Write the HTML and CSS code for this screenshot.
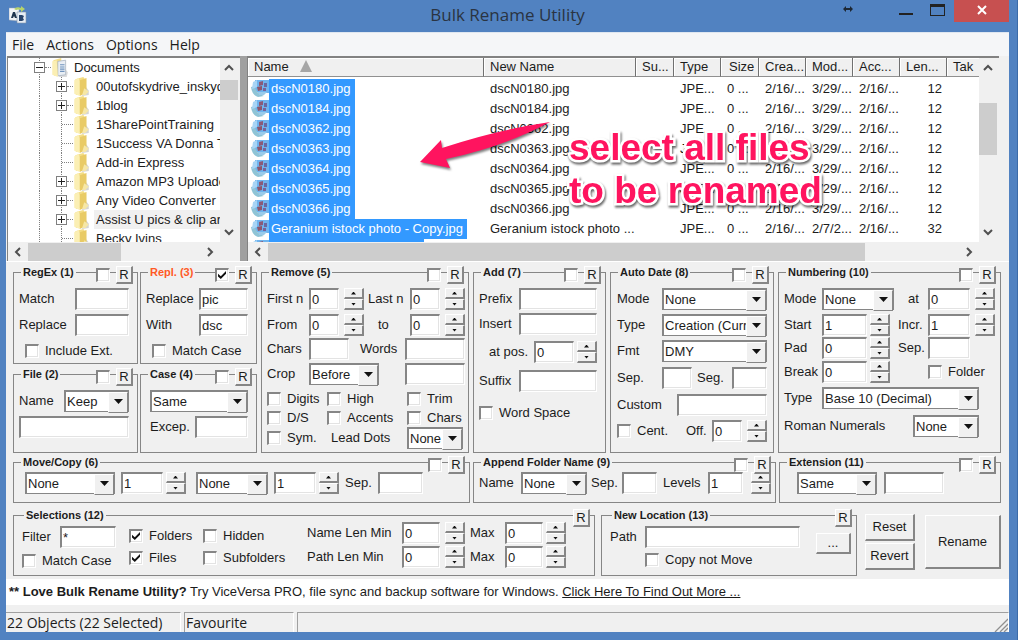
FILE: index.html
```
<!DOCTYPE html>
<html lang="en">
<head>
    <meta charset="UTF-8">
    <meta name="viewport" content="width=device-width, initial-scale=1.0">
    <title>Bulk Rename Utility</title>
    <link rel="stylesheet" href="styles.css">
</head>
<body>

<!-- Shared icons -->
<svg class="defs" aria-hidden="true">
    <symbol id="folder" viewBox="0 0 15 17">
        <path d="M9 6 L14 12 L14 16 L8 17 Z" fill="#b9b9b9" opacity=".6"/>
        <path d="M2 2 L9 0 L10 1 L10 14 L3 16 L2 15 Z" fill="#f3dd86"/>
        <path d="M1 3 L5 1 L6 4 L6 17 L1 15 Z" fill="#fbefb4"/>
        <path d="M6 3 L12 1 L12 14 L6 17 Z" fill="#e9cb66"/>
        <path d="M10 10 L14 13 L11 16 L8 16 Z" fill="#f6e7a6"/>
    </symbol>
    <symbol id="documents" viewBox="0 0 15 17">
        <path d="M9 4 L15 13 L14 17 L7 17 Z" fill="#c4c4c4" opacity=".6"/>
        <path d="M2 2 L9 0 L10 14 L3 16 Z" fill="#f3dd86"/>
        <path d="M6 3 L13 2 L13 15 L6 16 Z" fill="#e9eef4" stroke="#a9b4c0" stroke-width=".7"/>
        <path d="M8 6 H12 M8 8 H12 M8 10 H12 M8 12 H12" stroke="#6f93bd" stroke-width="1"/>
        <path d="M1 3 L5 2 L6 17 L1 15 Z" fill="#fbefb4"/>
    </symbol>
    <symbol id="image" viewBox="0 0 18 18">
        <path d="M4 1 H18 V14 H8 L4 12 Z" fill="#6fb4ee"/>
        <path d="M0 8 Q1 16 7 18 L13 17 Q4 14 4 7 Z" fill="#8fc4d6"/>
        <path d="M2 3 L6 1 L6 8 L1 10 Z" fill="#a8d4f5"/>
        <path d="M8 3 L12 2 L12 6 L8 7 Z" fill="#8a5a78"/>
        <path d="M13 4 H16 V8 H13 Z" fill="#6b68a0"/>
        <path d="M6 8 L11 7 L11 11 L7 12 Z" fill="#8d566c"/>
        <path d="M12 9 H15 V12 H12 Z" fill="#76639a"/>
        <path d="M8 13 L16 13 L13 16 L8 16 Z" fill="#9bcbe9"/>
    </symbol>
    <symbol id="chev-up" viewBox="0 0 10 8"><path d="M1 6 L5 2 L9 6" fill="none" stroke="#505050" stroke-width="2"/></symbol>
    <symbol id="chev-down" viewBox="0 0 10 8"><path d="M1 2 L5 6 L9 2" fill="none" stroke="#505050" stroke-width="2"/></symbol>
    <symbol id="chev-left" viewBox="0 0 8 10"><path d="M6 1 L2 5 L6 9" fill="none" stroke="#505050" stroke-width="2"/></symbol>
    <symbol id="chev-right" viewBox="0 0 8 10"><path d="M2 1 L6 5 L2 9" fill="none" stroke="#505050" stroke-width="2"/></symbol>
</svg>

<div class="window">

    <!-- Title bar -->
    <header class="titlebar">
        <svg class="app-icon" viewBox="0 0 18 18" width="18" height="18">
            <path d="M0 2 L10 2 L10 15 L0 14 Z" fill="#f2f4f7" stroke="#9aa6b4" stroke-width=".5"/>
            <path d="M8 6 H17 V17 H8 Z" fill="#e6edf5" stroke="#8595a8" stroke-width=".6"/>
            <path d="M5 3 Q8 0 12 2 L12 0 L16 3 L12 6 L12 4 Q9 3 7 4 Z" fill="#b6d36a"/>
            <path d="M2 12 L4 6 H6 L8 12 H6 L5 10 L4 12 Z" fill="#20364f"/>
            <path d="M10 9 H13 L15 10 L14 12 L15 14 L13 15 H10 Z" fill="#28446b"/>
        </svg>
        <h1>Bulk Rename Utility</h1>
        <div class="controls">
            <svg class="resize" viewBox="0 0 10 8" width="10" height="8"><path d="M0 4 L3 1 V3 H7 V1 L10 4 L7 7 V5 H3 V7 Z" fill="#1d2733"/></svg>
            <button class="min" aria-label="Minimize"></button>
            <button class="max" aria-label="Maximize"></button>
            <button class="close" aria-label="Close">
                <svg viewBox="0 0 10 10" width="10" height="10"><path d="M1 1 L9 9 M9 1 L1 9" stroke="#fff" stroke-width="2"/></svg>
            </button>
        </div>
    </header>

    <!-- Menu -->
    <nav class="menu">
        <a href="#">File</a>
        <a href="#">Actions</a>
        <a href="#">Options</a>
        <a href="#">Help</a>
    </nav>

    <!-- Folder tree and file list -->
    <div class="panes">
        <div class="tree-pane">
            <div class="scroll-area">
                <ul class="tree">
                    <li class="root"><span class="box minus"></span><svg class="folder"><use href="#documents"/></svg><span class="name">Documents</span></li>
                    <li><span class="box plus"></span><svg class="folder"><use href="#folder"/></svg><span class="name">00utofskydrive_inskydrive</span></li>
                    <li><span class="box plus"></span><svg class="folder"><use href="#folder"/></svg><span class="name">1blog</span></li>
                    <li><span class="box"></span><svg class="folder"><use href="#folder"/></svg><span class="name">1SharePointTraining</span></li>
                    <li><span class="box"></span><svg class="folder"><use href="#folder"/></svg><span class="name">1Success VA Donna T</span></li>
                    <li><span class="box"></span><svg class="folder"><use href="#folder"/></svg><span class="name">Add-in Express</span></li>
                    <li><span class="box plus"></span><svg class="folder"><use href="#folder"/></svg><span class="name">Amazon MP3 Uploader</span></li>
                    <li><span class="box plus"></span><svg class="folder"><use href="#folder"/></svg><span class="name">Any Video Converter</span></li>
                    <li><span class="box plus"></span><svg class="folder"><use href="#folder"/></svg><span class="name current">Assist U pics &amp; clip art</span></li>
                    <li><span class="box"></span><svg class="folder"><use href="#folder"/></svg><span class="name">Becky Ivins</span></li>
                </ul>
                <div class="vscroll tree-v">
                    <svg width="10" height="8"><use href="#chev-up"/></svg>
                    <div class="thumb"></div>
                    <svg width="10" height="8"><use href="#chev-down"/></svg>
                </div>
            </div>
            <div class="hscroll tree-h">
                <svg width="8" height="10"><use href="#chev-left"/></svg>
                <div class="thumb"></div>
                <svg width="8" height="10"><use href="#chev-right"/></svg>
            </div>
        </div>

        <div class="splitter"></div>

        <div class="list-pane">
            <div class="scroll-area">
                <div class="files">
                    <table>
                        <colgroup>
                            <col><col class="c-new"><col class="c-38"><col class="c-47"><col class="c-38"><col class="c-47"><col class="c-47"><col class="c-47"><col class="c-47"><col class="c-last">
                        </colgroup>
                        <thead>
                            <tr><th>Name <svg class="sort" viewBox="0 0 12 12" width="12" height="12"><path d="M6 0 L12 12 H0 Z" fill="#a6a6a6"/></svg></th><th>New Name</th><th>Su...</th><th>Type</th><th class="size">Size</th><th>Crea...</th><th>Mod...</th><th>Acc...</th><th>Len...</th><th>Tak</th></tr>
                        </thead>
                        <tbody>
                            <tr><td><svg class="pic"><use href="#image"/></svg><span class="sel">dscN0180.jpg</span></td><td>dscN0180.jpg</td><td></td><td>JPE...</td><td>0 ...</td><td>2/16/...</td><td>3/29/...</td><td>2/16/...</td><td class="num">12</td><td></td></tr>
                            <tr><td><svg class="pic"><use href="#image"/></svg><span class="sel">dscN0184.jpg</span></td><td>dscN0184.jpg</td><td></td><td>JPE...</td><td>0 ...</td><td>2/16/...</td><td>3/29/...</td><td>2/16/...</td><td class="num">12</td><td></td></tr>
                            <tr><td><svg class="pic"><use href="#image"/></svg><span class="sel">dscN0362.jpg</span></td><td>dscN0362.jpg</td><td></td><td>JPE...</td><td>0 ...</td><td>2/16/...</td><td>3/29/...</td><td>2/16/...</td><td class="num">12</td><td></td></tr>
                            <tr><td><svg class="pic"><use href="#image"/></svg><span class="sel">dscN0363.jpg</span></td><td>dscN0363.jpg</td><td></td><td>JPE...</td><td>0 ...</td><td>2/16/...</td><td>3/29/...</td><td>2/16/...</td><td class="num">12</td><td></td></tr>
                            <tr><td><svg class="pic"><use href="#image"/></svg><span class="sel">dscN0364.jpg</span></td><td>dscN0364.jpg</td><td></td><td>JPE...</td><td>0 ...</td><td>2/16/...</td><td>3/29/...</td><td>2/16/...</td><td class="num">12</td><td></td></tr>
                            <tr><td><svg class="pic"><use href="#image"/></svg><span class="sel">dscN0365.jpg</span></td><td>dscN0365.jpg</td><td></td><td>JPE...</td><td>0 ...</td><td>2/16/...</td><td>3/29/...</td><td>2/16/...</td><td class="num">12</td><td></td></tr>
                            <tr><td><svg class="pic"><use href="#image"/></svg><span class="sel">dscN0366.jpg</span></td><td>dscN0366.jpg</td><td></td><td>JPE...</td><td>0 ...</td><td>2/16/...</td><td>3/29/...</td><td>2/16/...</td><td class="num">12</td><td></td></tr>
                            <tr><td><svg class="pic"><use href="#image"/></svg><span class="sel">Geranium istock photo - Copy.jpg</span></td><td>Geranium istock photo ...</td><td></td><td>JPE...</td><td>0 ...</td><td>2/16/...</td><td>2/7/2...</td><td>2/16/...</td><td class="num">32</td><td></td></tr>
                            <tr><td><svg class="pic"><use href="#image"/></svg><span class="sel next"></span></td><td></td><td></td><td></td><td></td><td></td><td></td><td></td><td></td><td></td></tr>
                        </tbody>
                    </table>
                </div>
                <div class="vscroll list-v">
                    <svg width="10" height="8"><use href="#chev-up"/></svg>
                    <div class="thumb"></div>
                    <svg width="10" height="8"><use href="#chev-down"/></svg>
                </div>
            </div>
            <div class="hscroll list-h">
                <svg width="8" height="10"><use href="#chev-left"/></svg>
                <div class="thumb"></div>
                <svg width="8" height="10"><use href="#chev-right"/></svg>
            </div>

            <!-- Callout over the list -->
            <svg class="arrow" viewBox="0 0 140 60" width="140" height="60">
                <path d="M4 46 L25 24 L26 32 Q80 14 134 6 Q90 30 30 43 L34 52 Z" fill="#ff145f"/>
            </svg>
            <p class="callout">select all files<br>to be renamed</p>
        </div>
    </div>

    <!-- Rename options -->
    <form class="options">
        <div class="line line-1">
            <div class="stack">
                <fieldset class="group">
                    <legend>RegEx (1)</legend>
                    <div class="toggle"><input type="checkbox" aria-label="RegEx"><button type="button" class="r">R</button></div>
                    <div class="rows even">
                        <div class="row"><label for="re-match" class="w56">Match</label><input id="re-match" class="grow"></div>
                        <div class="row"><label for="re-rep" class="w56">Replace</label><input id="re-rep" class="grow"></div>
                        <label class="check in"><input type="checkbox">Include Ext.</label>
                    </div>
                </fieldset>
                <fieldset class="group">
                    <legend class="active">Repl. (3)</legend>
                    <div class="toggle"><input type="checkbox" aria-label="Repl." checked><button type="button" class="r">R</button></div>
                    <div class="rows even">
                        <div class="row"><label for="rp-rep" class="w53">Replace</label><input id="rp-rep" class="grow" value="pic"></div>
                        <div class="row"><label for="rp-with" class="w53">With</label><input id="rp-with" class="grow" value="dsc"></div>
                        <label class="check in"><input type="checkbox">Match Case</label>
                    </div>
                </fieldset>
                <fieldset class="group">
                    <legend>File (2)</legend>
                    <div class="toggle"><input type="checkbox" aria-label="File"><button type="button" class="r">R</button></div>
                    <div class="rows even">
                        <div class="row"><label for="file-name" class="w45">Name</label><span class="select grow"><select id="file-name"><option>Keep</option></select></span></div>
                        <div class="row"><input class="grow" aria-label="File name"></div>
                    </div>
                </fieldset>
                <fieldset class="group">
                    <legend>Case (4)</legend>
                    <div class="toggle"><input type="checkbox" aria-label="Case"><button type="button" class="r">R</button></div>
                    <div class="rows even case">
                        <div class="row"><span class="select grow"><select aria-label="Case mode"><option>Same</option></select></span></div>
                        <div class="row"><label for="excep" class="w45">Excep.</label><input id="excep" class="grow"></div>
                    </div>
                </fieldset>
            </div>

            <fieldset class="group">
                <legend>Remove (5)</legend>
                <div class="toggle"><input type="checkbox" aria-label="Remove"><button type="button" class="r">R</button></div>
                <div class="rows remove">
                    <div class="row">
                        <label for="first" class="w42">First n</label><input id="first" class="w30" value="0"><span class="spin"><button type="button" aria-label="Up"></button><button type="button" aria-label="Down"></button></span>
                        <label for="last" class="w42 push">Last n</label><input id="last" class="w30" value="0"><span class="spin"><button type="button" aria-label="Up"></button><button type="button" aria-label="Down"></button></span>
                    </div>
                    <div class="row">
                        <label for="from" class="w42">From</label><input id="from" class="w30" value="0"><span class="spin"><button type="button" aria-label="Up"></button><button type="button" aria-label="Down"></button></span>
                        <label for="to" class="w42 push center">to</label><input id="to" class="w30" value="0"><span class="spin"><button type="button" aria-label="Up"></button><button type="button" aria-label="Down"></button></span>
                    </div>
                    <div class="row"><label for="chars" class="w42">Chars</label><input id="chars" class="w40"><label for="words" class="w45 push">Words</label><input id="words" class="w60"></div>
                    <div class="row"><label for="crop" class="w42">Crop</label><span class="select w70"><select id="crop"><option>Before</option></select></span><input class="w60 push" aria-label="Crop text"></div>
                    <div class="row checks"><label class="check"><input type="checkbox">Digits</label><label class="check"><input type="checkbox">High</label><label class="check"><input type="checkbox">Trim</label></div>
                    <div class="row checks"><label class="check"><input type="checkbox">D/S</label><label class="check"><input type="checkbox">Accents</label><label class="check"><input type="checkbox">Chars</label></div>
                    <div class="row checks"><label class="check"><input type="checkbox">Sym.</label><label for="dots" class="dots">Lead Dots</label><span class="select w56"><select id="dots"><option>None</option></select></span></div>
                </div>
            </fieldset>

            <fieldset class="group">
                <legend>Add (7)</legend>
                <div class="toggle"><input type="checkbox" aria-label="Add"><button type="button" class="r">R</button></div>
                <div class="rows add">
                    <div class="row"><label for="prefix" class="w40">Prefix</label><input id="prefix" class="grow"></div>
                    <div class="row"><label for="insert" class="w40">Insert</label><input id="insert" class="grow"></div>
                    <div class="row in"><label for="atpos" class="w45 push">at pos.</label><input id="atpos" class="w40" value="0"><span class="spin near"><button type="button" aria-label="Up"></button><button type="button" aria-label="Down"></button></span></div>
                    <div class="row"><label for="suffix" class="w40">Suffix</label><input id="suffix" class="grow"></div>
                    <label class="check"><input type="checkbox">Word Space</label>
                </div>
            </fieldset>

            <fieldset class="group">
                <legend>Auto Date (8)</legend>
                <div class="toggle"><input type="checkbox" aria-label="Auto Date"><button type="button" class="r">R</button></div>
                <div class="rows date">
                    <div class="row"><label for="d-mode" class="w45">Mode</label><span class="select grow"><select id="d-mode"><option>None</option></select></span></div>
                    <div class="row"><label for="d-type" class="w45">Type</label><span class="select grow"><select id="d-type"><option>Creation (Curr.)</option></select></span></div>
                    <div class="row"><label for="d-fmt" class="w45">Fmt</label><span class="select grow"><select id="d-fmt"><option>DMY</option></select></span></div>
                    <div class="row"><label for="d-sep" class="w45">Sep.</label><input id="d-sep" class="w30"><label for="d-seg" class="w35 push">Seg.</label><input id="d-seg" class="w35"></div>
                    <div class="row"><label for="d-custom" class="w60">Custom</label><input id="d-custom" class="grow"></div>
                    <div class="row"><label class="check"><input type="checkbox">Cent.</label><label for="d-off" class="w26 push">Off.</label><input id="d-off" class="w30" value="0"><span class="spin"><button type="button" aria-label="Up"></button><button type="button" aria-label="Down"></button></span></div>
                </div>
            </fieldset>

            <fieldset class="group">
                <legend>Numbering (10)</legend>
                <div class="toggle"><input type="checkbox" aria-label="Numbering"><button type="button" class="r">R</button></div>
                <div class="rows numbering">
                    <div class="row"><label for="n-mode" class="w38">Mode</label><span class="select w72"><select id="n-mode"><option>None</option></select></span><div class="half"><label for="n-at" class="w30 center">at</label><input id="n-at" class="w42" value="0"><span class="spin"><button type="button" aria-label="Up"></button><button type="button" aria-label="Down"></button></span></div></div>
                    <div class="row"><label for="n-start" class="w38">Start</label><input id="n-start" class="w45" value="1"><span class="spin near"><button type="button" aria-label="Up"></button><button type="button" aria-label="Down"></button></span><div class="half"><label for="n-incr" class="w30">Incr.</label><input id="n-incr" class="w42" value="1"><span class="spin"><button type="button" aria-label="Up"></button><button type="button" aria-label="Down"></button></span></div></div>
                    <div class="row"><label for="n-pad" class="w38">Pad</label><input id="n-pad" class="w45" value="0"><span class="spin near"><button type="button" aria-label="Up"></button><button type="button" aria-label="Down"></button></span><div class="half"><label for="n-sep" class="w30">Sep.</label><input id="n-sep" class="w42"></div></div>
                    <div class="row"><label for="n-break" class="w38">Break</label><input id="n-break" class="w45" value="0"><span class="spin near"><button type="button" aria-label="Up"></button><button type="button" aria-label="Down"></button></span><div class="half folder-opt"><label class="check"><input type="checkbox">Folder</label></div></div>
                    <div class="row short"><label for="n-type" class="w38">Type</label><span class="select grow"><select id="n-type"><option>Base 10 (Decimal)</option></select></span></div>
                    <div class="row short"><label for="roman">Roman Numerals</label><span class="select w66 push"><select id="roman"><option>None</option></select></span></div>
                </div>
            </fieldset>
        </div>

        <div class="line line-2">
            <fieldset class="group low">
                <legend>Move/Copy (6)</legend>
                <div class="toggle"><input type="checkbox" aria-label="Move/Copy"><button type="button" class="r">R</button></div>
                <div class="row move">
                    <span class="select w90"><select aria-label="First part"><option>None</option></select></span>
                    <span class="pair"><input class="w42" value="1" aria-label="First count"><span class="spin near"><button type="button" aria-label="Up"></button><button type="button" aria-label="Down"></button></span></span>
                    <span class="select w72 second"><select aria-label="Second part"><option>None</option></select></span>
                    <span class="pair"><input class="w42" value="1" aria-label="Second count"><span class="spin near"><button type="button" aria-label="Up"></button><button type="button" aria-label="Down"></button></span></span>
                    <label for="m-sep">Sep.</label><input id="m-sep" class="w45">
                </div>
            </fieldset>
            <fieldset class="group low">
                <legend>Append Folder Name (9)</legend>
                <div class="toggle"><input type="checkbox" aria-label="Append Folder Name"><button type="button" class="r">R</button></div>
                <div class="row append">
                    <label for="a-name" class="w42">Name</label><span class="select w66"><select id="a-name"><option>None</option></select></span>
                    <label for="a-sep" class="w35 after">Sep.</label><input id="a-sep" class="w35">
                    <label for="a-lev" class="w45 push">Levels</label><input id="a-lev" class="w35" value="1">
                    <span class="spin far"><button type="button" aria-label="Up"></button><button type="button" aria-label="Down"></button></span>
                </div>
            </fieldset>
            <fieldset class="group low">
                <legend>Extension (11)</legend>
                <div class="toggle"><input type="checkbox" aria-label="Extension"><button type="button" class="r">R</button></div>
                <div class="row ext">
                    <span class="select w80"><select aria-label="Extension mode"><option>Same</option></select></span>
                    <input class="w60" aria-label="New extension">
                </div>
            </fieldset>
        </div>

        <div class="line line-3">
            <fieldset class="group last">
                <legend>Selections (12)</legend>
                <div class="toggle"><button type="button" class="r">R</button></div>
                <div class="selections">
                    <div class="filter">
                        <div class="row"><label for="filter" class="w38">Filter</label><input id="filter" class="w56" value="*"></div>
                        <label class="check"><input type="checkbox">Match Case</label>
                    </div>
                    <div class="kinds">
                        <label class="check"><input type="checkbox" checked>Folders</label>
                        <label class="check"><input type="checkbox">Hidden</label>
                        <label class="check"><input type="checkbox" checked>Files</label>
                        <label class="check"><input type="checkbox">Subfolders</label>
                    </div>
                    <div class="lengths">
                        <div class="row">
                            <label for="nmin" class="w95">Name Len Min</label><input id="nmin" class="w38" value="0"><span class="spin"><button type="button" aria-label="Up"></button><button type="button" aria-label="Down"></button></span>
                            <label for="nmax" class="w35 max-label">Max</label><input id="nmax" class="w38" value="0"><span class="spin near"><button type="button" aria-label="Up"></button><button type="button" aria-label="Down"></button></span>
                        </div>
                        <div class="row">
                            <label for="pmin" class="w95">Path Len Min</label><input id="pmin" class="w38" value="0"><span class="spin"><button type="button" aria-label="Up"></button><button type="button" aria-label="Down"></button></span>
                            <label for="pmax" class="w35 max-label">Max</label><input id="pmax" class="w38" value="0"><span class="spin near"><button type="button" aria-label="Up"></button><button type="button" aria-label="Down"></button></span>
                        </div>
                    </div>
                </div>
            </fieldset>
            <fieldset class="group last">
                <legend>New Location (13)</legend>
                <div class="toggle"><button type="button" class="r">R</button></div>
                <div class="location">
                    <label for="path" class="w35">Path</label>
                    <div class="path">
                        <input id="path">
                        <label class="check"><input type="checkbox">Copy not Move</label>
                    </div>
                    <button type="button" class="btn browse">...</button>
                </div>
            </fieldset>
            <div class="side">
                <button type="button" class="btn">Reset</button>
                <button type="button" class="btn">Revert</button>
            </div>
            <button type="button" class="btn rename">Rename</button>
        </div>
    </form>

    <!-- Promo line -->
    <p class="promo"><b>** Love Bulk Rename Utility?</b> Try ViceVersa PRO, file sync and backup software for Windows. <a href="#">Click Here To Find Out More ...</a></p>

    <!-- Status bar -->
    <footer class="status">
        <span class="objects">22 Objects (22 Selected)</span>
        <span class="fav">Favourite</span>
        <span class="rest"><svg viewBox="0 0 14 14" width="14" height="14"><path d="M1 14 L14 1 M6 14 L14 6 M10 14 L14 10" stroke="#909090" stroke-width="1.3"/></svg></span>
    </footer>
</div>

</body>
</html>
```
FILE: styles.css
```
* {
    box-sizing: border-box;
}

body {
    margin: 0;
    background: #fff;
    color: #1c1c1c;
    font-family: "Liberation Sans", Arial, sans-serif;
    font-size: 13px;
    line-height: 16px;
}

button, input, select {
    font: inherit;
    color: inherit;
    margin: 0;
    border-radius: 0;
}

.defs {
    display: none;
}

/* Window frame */
.window {
    display: flex;
    flex-direction: column;
    min-height: 100vh;
    margin-right: 6px;
    padding: 0 8px 8px 6px;
    background: #5182c1;
    border-right: 1px solid #3c6ba8;
}

.titlebar {
    display: grid;
    grid-template-columns: 1fr auto 1fr;
    height: 32px;
}

.titlebar h1 {
    margin: 0;
    font: 17px/30px "Open Sans", "Noto Sans", sans-serif;
    color: #2a3442;
}

.app-icon {
    margin: 6px 0 0 3px;
}

.controls {
    display: flex;
    justify-content: flex-end;
    align-items: flex-start;
}

.controls button {
    padding: 0;
    background: none;
    border: 0;
}

.controls .resize {
    margin: 5px 46px 0 0;
}

.controls .min {
    width: 14px;
    height: 2px;
    margin: 13px 17px 0 0;
    background: #222;
}

.controls .max {
    width: 15px;
    height: 12px;
    margin: 4px 9px 0 0;
    border: 1px solid #222;
    border-top-width: 3px;
}

.controls .close {
    width: 55px;
    height: 22px;
    background: #c75050;
}

.controls .close svg {
    display: block;
    margin: 0 auto 3px;
}

/* Menu */
.menu {
    display: flex;
    gap: 12px;
    height: 24px;
    padding-left: 6px;
    background: #f5f6f8;
    border-top: 1px solid #dfe7f1;
    font: 14px/23px "Open Sans", "Noto Sans", sans-serif;
}

.menu a {
    color: #1c1c1c;
    text-decoration: none;
}

/* Panes */
.panes {
    display: flex;
    height: 205px;
    padding: 0 10px 0 1px;
    background: #f0f0f0;
}

.tree-pane {
    width: 233px;
    border-top: 2px solid #828282;
    border-left: 1px solid #828282;
}

.list-pane {
    position: relative;
    flex: 1;
    min-width: 0;
    border-top: 2px solid #828282;
    border-left: 1px solid #828282;
}

.splitter {
    width: 7px;
    background: #a0a0a0;
}

.scroll-area {
    display: flex;
    height: 184px;
    background: #fff;
}

.vscroll, .hscroll {
    display: flex;
    align-items: center;
    background: #f0f0f0;
}

.vscroll {
    flex: none;
    flex-direction: column;
    width: 20px;
    padding: 6px 2px 6px 0;
}

.hscroll {
    height: 19px;
    padding: 0 26px 0 6px;
}

.thumb {
    background: #cdcdcd;
}

.vscroll .thumb {
    width: 18px;
    margin-bottom: auto;
}

.hscroll .thumb {
    height: 18px;
    margin-left: 6px;
    margin-right: auto;
}

.tree-v .thumb {
    height: 20px;
    margin-top: 8px;
}

.tree-h .thumb {
    width: 93px;
}

.list-v .thumb {
    height: 52px;
    margin-top: 31px;
}

.list-h .thumb {
    width: 83%;
}

/* Tree */
.tree {
    flex: 1;
    min-width: 0;
    margin: 0;
    padding: 0;
    overflow: hidden;
    list-style: none;
}

.tree li {
    position: relative;
    display: flex;
    align-items: center;
    height: 19px;
    padding-left: 48px;
    white-space: nowrap;
}

.tree li.root {
    padding-left: 26px;
}

/* dotted guides down the rows */
.tree li::before, .tree li::after {
    content: "";
    position: absolute;
    top: 0;
    bottom: 0;
    left: 31px;
    border-left: 1px dotted #808080;
}

.tree li::after {
    left: 53px;
}

.tree li.root::after {
    display: none;
}

.box {
    position: relative;
    z-index: 1;
    flex: none;
    width: 11px;
    height: 11px;
    margin-right: 6px;
}

.box::after {
    content: "";
    position: absolute;
    top: 5px;
    left: 6px;
    width: 11px;
    border-top: 1px dotted #808080;
}

.plus, .minus {
    border: 1px solid #808080;
    background: linear-gradient(#222, #222) center / 7px 1px no-repeat #fff;
}

.plus {
    background: linear-gradient(#222, #222) center / 7px 1px no-repeat, linear-gradient(#222, #222) center / 1px 7px no-repeat #fff;
}

.plus::after, .minus::after {
    top: 4px;
    left: 10px;
    width: 6px;
}

.folder {
    flex: none;
    width: 17px;
    height: 19px;
}

.name {
    flex: 1;
    margin-left: 4px;
    padding-left: 2px;
    line-height: 19px;
}

.current {
    background: #f0f0f0;
}

/* File list */
.files {
    flex: 1;
    min-width: 0;
    overflow: hidden;
}

.files table {
    width: 100%;
    table-layout: fixed;
    border-collapse: separate;
    border-spacing: 0;
}

/* small gap under the header */
.files tbody::before {
    content: "";
    display: block;
    height: 2px;
}

.c-new { width: 152px; }
.c-38 { width: 38px; }
.c-47 { width: 47px; }
.c-last { width: 32px; }

.files th, .files td {
    height: 20px;
    padding: 0 0 0 6px;
    font-weight: normal;
    text-align: left;
    white-space: nowrap;
}

.files th {
    height: 19px;
    background: #f0f0f0;
    border-right: 1px solid #707070;
    border-bottom: 1px solid #909090;
    box-shadow: inset 1px 1px #fff;
}

.files th:last-child {
    border-right: 0;
    overflow: hidden;
}

.files .size {
    padding-left: 8px;
}

.sort {
    margin-left: 8px;
    vertical-align: -1px;
}

.files td:first-child {
    padding: 0 0 0 3px;
}

.files td .pic {
    width: 18px;
    height: 18px;
    vertical-align: middle;
}

.files .num {
    padding-right: 5px;
    text-align: right;
}

.sel {
    display: inline-block;
    padding: 0 4px 0 2px;
    background: #3399ff;
    color: #fff;
    line-height: 20px;
    vertical-align: top;
}

.sel.next {
    width: 155px;
    height: 20px;
}

/* Callout */
.arrow {
    position: absolute;
    left: 168px;
    top: 58px;
    filter: drop-shadow(1px 2px 1px rgba(0, 0, 0, .5));
}

.callout {
    position: absolute;
    left: 321px;
    top: 68px;
    margin: 0;
    color: #ff145f;
    font-size: 37px;
    font-weight: bold;
    line-height: 43px;
    white-space: nowrap;
    -webkit-text-stroke: 5px #fff;
    paint-order: stroke fill;
    filter: drop-shadow(1px 2px 1px rgba(0, 0, 0, .6));
}

/* Options form */
.options {
    padding: 4px 8px 3px 7px;
    background: #f0f0f0;
    border-top: 1px solid #fff;
}

.line {
    display: grid;
}

.line-1 {
    grid-template-columns: minmax(0, 244fr) minmax(0, 208fr) minmax(0, 133fr) minmax(0, 164fr) minmax(0, 223fr);
    gap: 4px;
}

.stack {
    display: grid;
    grid-template-columns: minmax(0, 125fr) minmax(0, 117fr);
    grid-template-rows: auto 1fr;
    gap: 4px 2px;
}

.line-2 {
    grid-template-columns: minmax(0, 457fr) minmax(0, 303fr) minmax(0, 222fr);
    gap: 3px;
    margin-top: 3px;
}

.line-3 {
    grid-template-columns: minmax(0, 582fr) minmax(0, 256fr) 54px 78px;
    gap: 6px;
    margin-top: 6px;
}

.group {
    position: relative;
    min-width: 0;
    margin: 0;
    padding: 10px 8px 1px 5px;
    border: 1px solid #868686;
}

.group legend {
    margin-left: 2px;
    padding: 0 2px;
    font-size: 11px;
    font-weight: bold;
    line-height: 12px;
}

.group .active {
    color: #ff5a26;
}

.group.low {
    padding: 4px 4px 8px 5px;
}

.group.last {
    padding: 1px 8px 5px;
}

.toggle {
    position: absolute;
    top: -12px;
    right: 4px;
    display: flex;
    align-items: center;
    gap: 6px;
}

.rows {
    display: grid;
    grid-template-columns: minmax(0, 1fr);
    align-items: start;
}

.even {
    gap: 4px;
}

.row {
    display: flex;
    align-items: center;
    height: 22px;
}

.remove {
    grid-template-rows: 26px 24px 25px 26px 19px 19px 24px;
    margin-right: -5px;
}

.add {
    grid-template-rows: 25px 28px 29px 32px 22px;
}

.date {
    grid-template-rows: 26px 26px 27px 27px 26px 22px;
    padding-left: 1px;
    margin-right: -2px;
}

.numbering {
    grid-template-rows: 26px 23px 24px 26px 28px 22px;
    margin-right: -3px;
}

.short {
    padding-right: 16px;
}

.half {
    display: flex;
    align-items: center;
    width: 97px;
    margin-left: auto;
}

.folder-opt {
    padding-left: 30px;
}

.case {
    padding-left: 4px;
}

.in {
    padding-left: 6px;
}

.remove .checks {
    display: grid;
    grid-template-columns: 60px 80px 1fr;
    height: 19px;
}

.remove .dots {
    padding-left: 4px;
}

.check {
    display: flex;
    align-items: center;
    gap: 6px;
    min-height: 19px;
    white-space: nowrap;
}

.even .check, .add .check {
    height: 22px;
}

.row label {
    flex: none;
    white-space: nowrap;
}

.row .push {
    margin-left: auto;
}

.center {
    padding-left: 10px;
}

.grow {
    flex: 1;
    min-width: 0;
}

.w26 { width: 26px; }
.w30 { width: 30px; }
.w35 { width: 35px; }
.w38 { width: 38px; }
.w40 { width: 40px; }
.w42 { width: 42px; }
.w45 { width: 45px; }
.w53 { width: 53px; }
.w56 { width: 56px; }
.w60 { width: 60px; }
.w66 { width: 66px; }
.w70 { width: 70px; }
.w72 { width: 72px; }
.w80 { width: 80px; }
.w90 { width: 90px; }
.w95 { width: 95px; }

/* Controls */
input, .select {
    height: 22px;
    padding: 0 1px;
    background: #fff;
    border: solid;
    border-width: 2px 1px 1px 2px;
    border-color: #868686 #fff #fff #868686;
    box-shadow: inset -1px -1px #e3e3e3;
    outline: 0;
}

input[type="checkbox"] {
    appearance: none;
    flex: none;
    width: 14px;
    height: 14px;
    padding: 0;
}

input[type="checkbox"]:checked::before {
    content: "";
    display: block;
    width: 8px;
    height: 8px;
    margin: 1px;
    background: #111;
    clip-path: polygon(0 35%, 35% 65%, 100% 0, 100% 35%, 35% 100%, 0 70%);
}

.select {
    position: relative;
    flex: none;
    padding: 0;
    border-color: #868686;
}

.select.grow {
    flex: 1;
}

.select select {
    appearance: none;
    display: block;
    width: 100%;
    height: 19px;
    padding: 0 14px 0 1px;
    background: #fff;
    border: 0;
    outline: 0;
    line-height: 19px;
}

/* drop-down button and its triangle */
.select::after {
    content: "";
    position: absolute;
    top: 0;
    right: 0;
    width: 18px;
    height: 19px;
    background: #f0f0f0;
    border: 1px solid;
    border-color: #fff #868686 #868686 #fff;
    pointer-events: none;
}

.select::before {
    content: "";
    position: absolute;
    z-index: 1;
    top: 7px;
    right: 5px;
    width: 9px;
    height: 5px;
    background: #111;
    clip-path: polygon(0 0, 100% 0, 50% 100%);
    pointer-events: none;
}

.spin {
    flex: none;
    display: flex;
    flex-direction: column;
    width: 20px;
    margin-left: 5px;
}

.spin.near {
    margin-left: 3px;
}

.spin.far {
    margin-left: 8px;
}

.spin button {
    height: 11px;
    padding: 2px 6px;
}

.spin button, .btn, .r {
    background: #f0f0f0;
    border: solid;
    border-width: 1px 2px 2px 1px;
    border-color: #fff #868686 #868686 #fff;
}

.spin button::before {
    content: "";
    display: block;
    width: 5px;
    height: 3px;
    background: #111;
    clip-path: polygon(50% 0, 100% 100%, 0 100%);
}

.spin button + button::before {
    clip-path: polygon(0 0, 100% 0, 50% 100%);
}

.r {
    width: 17px;
    height: 18px;
    padding: 0;
    line-height: 15px;
}

.btn {
    padding: 0;
}

/* Lower rows */
.move {
    gap: 6px;
    padding-left: 6px;
}

.pair {
    display: flex;
    align-items: center;
}

.move .second {
    margin-left: 4px;
}

.append .after {
    padding-left: 4px;
}

.ext {
    gap: 7px;
    padding-left: 12px;
}

.selections {
    display: flex;
}

.filter {
    display: grid;
    gap: 3px;
    width: 107px;
    margin-top: 4px;
}

.kinds {
    display: grid;
    grid-template: 22px 22px / 74px 100px;
    margin-top: 3px;
}

.lengths {
    display: grid;
    gap: 2px;
    align-content: start;
    margin-left: 4px;
}

.max-label {
    margin-left: 5px;
}

.location {
    display: flex;
    align-items: flex-start;
    margin-top: 4px;
}

.location > label {
    line-height: 22px;
}

.path {
    flex: 1;
    min-width: 0;
    display: grid;
    gap: 2px;
    margin-right: 16px;
}

.path > input {
    width: 100%;
}

.browse {
    width: 35px;
    height: 21px;
    margin: 7px -3px 0 0;
}

.side {
    display: grid;
    gap: 2px;
    align-content: start;
    padding: 5px 2px 0;
}

.side .btn {
    height: 27px;
}

.rename {
    height: 54px;
    margin: 6px 0 0 2px;
}

/* Promo and status */
.promo {
    margin: 0;
    padding: 0 3px;
    background: #fff;
    line-height: 26px;
}

.promo a {
    color: inherit;
}

.status {
    display: flex;
    flex: 1;
    align-items: stretch;
    gap: 3px;
    padding-top: 7px;
    background: #f0f0f0;
    font: 14px/19px "Open Sans", "Noto Sans", sans-serif;
}

.status span {
    padding-left: 1px;
    border-top: 1px solid #a0a0a0;
    border-right: 1px solid #fff;
}

.status span + span {
    border-left: 1px solid #a0a0a0;
}

.status .objects {
    width: 175px;
}

.status .fav {
    width: 110px;
}

.status .rest {
    display: flex;
    flex: 1;
    justify-content: flex-end;
    align-items: flex-end;
}
```
